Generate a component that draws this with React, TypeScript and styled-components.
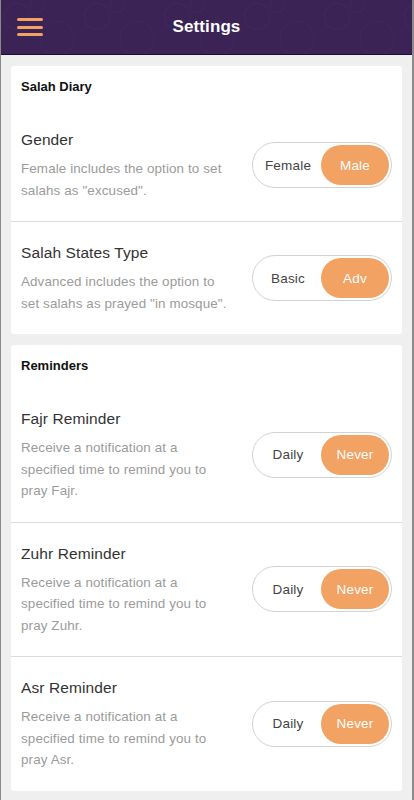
import styled, { createGlobalStyle } from "styled-components";

const GlobalStyle = createGlobalStyle`
  html, body {
    margin: 0;
    padding: 0;
    background: #efefef;
  }
  body {
    font-family: "Liberation Sans", Arial, sans-serif;
    -webkit-font-smoothing: antialiased;
  }
`;

const Screen = styled.div`
  width: 414px;
  min-height: 800px;
  box-sizing: border-box;
  background: #efefef;
  border-left: 1px solid #8a8a8a;
  border-right: 2px solid #8a8a8a;
  display: flex;
  flex-direction: column;
`;

const Header = styled.header`
  height: 55px;
  box-sizing: border-box;
  border-bottom: 1px solid #1c0f33;
  background-color: #3b2356;
  background-image: radial-gradient(circle at 20% 30%, transparent 0 12px, rgba(255, 255, 255, 0.025) 13px, transparent 14px),
    radial-gradient(circle at 70% 70%, transparent 0 16px, rgba(255, 255, 255, 0.02) 17px, transparent 18px),
    radial-gradient(circle at 45% 10%, transparent 0 6px, rgba(255, 255, 255, 0.025) 7px, transparent 8px);
  background-size: 80px 55px;
  display: grid;
  grid-template-columns: 60px 1fr 60px;
  align-items: center;
`;

const MenuButton = styled.button`
  border: 0;
  background: none;
  padding: 0 0 0 16px;
  display: flex;
  flex-direction: column;
  gap: 4.5px;
  cursor: pointer;

  span {
    display: block;
    width: 26px;
    height: 3px;
    border-radius: 2px;
    background: #f2a263;
  }
`;

const Title = styled.h1`
  margin: 0;
  text-align: center;
  color: #ffffff;
  font-size: 17px;
  font-weight: 700;
  letter-spacing: 0.1px;
`;

const Content = styled.main`
  padding: 11px 10px;
  display: flex;
  flex-direction: column;
  gap: 11px;
`;

const Card = styled.section`
  background: #ffffff;
  border-radius: 3px;
`;

const CardHeading = styled.h2`
  margin: 0;
  height: 43px;
  box-sizing: border-box;
  padding: 13px 10px 0;
  font-size: 13px;
  line-height: 16px;
  font-weight: 700;
  color: #111111;
`;

const Row = styled.div<{ $divider?: boolean }>`
  display: flex;
  align-items: center;
  justify-content: space-between;
  padding: 20px 10px 20px 10px;
  border-top: ${({ $divider }) => ($divider ? "1px solid #dcdcdc" : "0")};
`;

const RowText = styled.div`
  width: 210px;
  display: flex;
  flex-direction: column;
  gap: 7px;
`;

const RowTitle = styled.div`
  font-size: 15.5px;
  line-height: 22px;
  color: #333333;
  letter-spacing: 0.1px;
`;

const RowDesc = styled.div`
  font-size: 13.4px;
  line-height: 21.5px;
  letter-spacing: 0.12px;
  color: #9b9b9b;
`;

const Toggle = styled.div`
  width: 140px;
  height: 46px;
  box-sizing: border-box;
  border: 1px solid #d2d2d2;
  border-radius: 23px;
  padding: 2px;
  display: grid;
  grid-template-columns: 1fr 68px;
  background: #ffffff;
`;

const Option = styled.div<{ $active?: boolean }>`
  display: flex;
  align-items: center;
  justify-content: center;
  border-radius: 21px;
  font-size: 13.5px;
  letter-spacing: 0.2px;
  color: ${({ $active }) => ($active ? "#ffffff" : "#444444")};
  background: ${({ $active }) => ($active ? "#f2a263" : "transparent")};
`;

type Setting = {
  title: string;
  desc: string;
  options: [string, string];
};

const sections: { heading: string; items: Setting[] }[] = [
  {
    heading: "Salah Diary",
    items: [
      { title: "Gender", desc: 'Female includes the option to set salahs as "excused".', options: ["Female", "Male"] },
      { title: "Salah States Type", desc: 'Advanced includes the option to set salahs as prayed "in mosque".', options: ["Basic", "Adv"] },
    ],
  },
  {
    heading: "Reminders",
    items: [
      { title: "Fajr Reminder", desc: "Receive a notification at a specified time to remind you to pray Fajr.", options: ["Daily", "Never"] },
      { title: "Zuhr Reminder", desc: "Receive a notification at a specified time to remind you to pray Zuhr.", options: ["Daily", "Never"] },
      { title: "Asr Reminder", desc: "Receive a notification at a specified time to remind you to pray Asr.", options: ["Daily", "Never"] },
    ],
  },
];

export default function App() {
  return (
    <>
      <GlobalStyle />
      <Screen>
        <Header>
          <MenuButton aria-label="Menu">
            <span />
            <span />
            <span />
          </MenuButton>
          <Title>Settings</Title>
          <div />
        </Header>
        <Content>
          {sections.map(({ heading, items }) => (
            <Card key={heading}>
              <CardHeading>{heading}</CardHeading>
              {items.map(({ title, desc, options }, index) => (
                <Row key={title} $divider={index > 0}>
                  <RowText>
                    <RowTitle>{title}</RowTitle>
                    <RowDesc>{desc}</RowDesc>
                  </RowText>
                  <Toggle>
                    <Option>{options[0]}</Option>
                    <Option $active>{options[1]}</Option>
                  </Toggle>
                </Row>
              ))}
            </Card>
          ))}
        </Content>
      </Screen>
    </>
  );
}
